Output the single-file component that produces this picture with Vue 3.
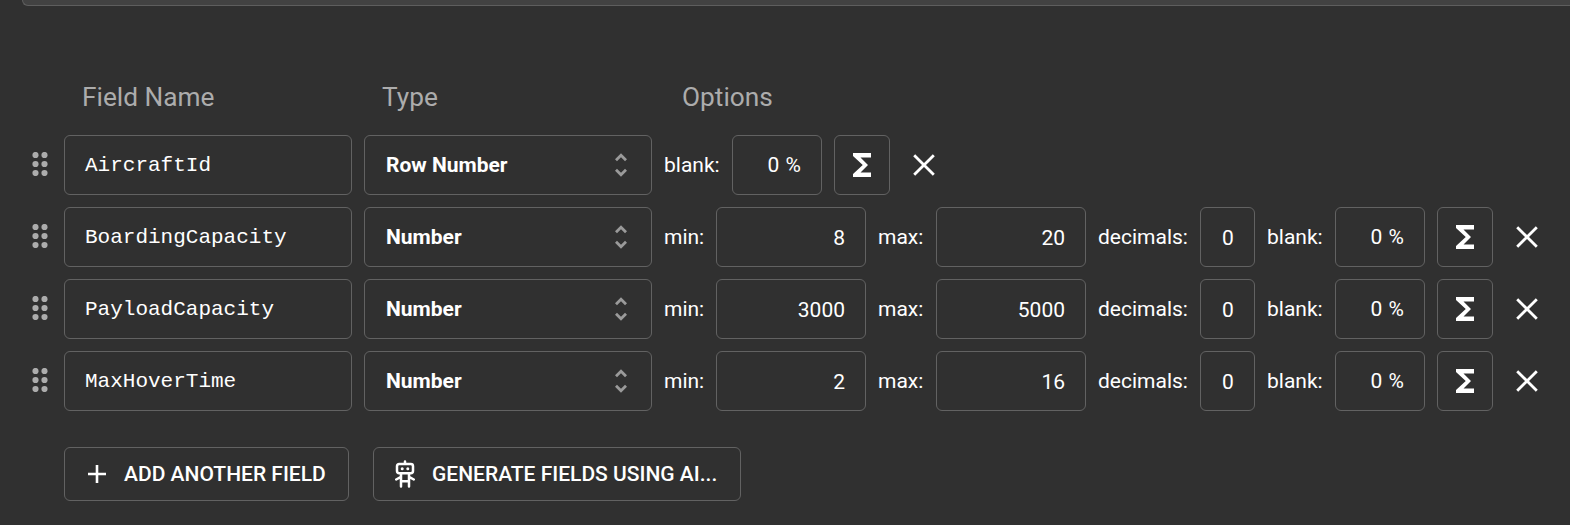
<script setup>
const rows = [
  { name: 'AircraftId', type: 'Row Number' },
  { name: 'BoardingCapacity', type: 'Number', min: '8', max: '20', decimals: '0' },
  { name: 'PayloadCapacity', type: 'Number', min: '3000', max: '5000', decimals: '0' },
  { name: 'MaxHoverTime', type: 'Number', min: '2', max: '16', decimals: '0' },
]
</script>

<template>
  <main class="page">
    <div class="panel"></div>
    <header class="head">
      <span class="col">Field Name</span>
      <span class="col">Type</span>
      <span class="col">Options</span>
    </header>
    <section class="rows">
      <div v-for="row in rows" :key="row.name" class="row">
        <svg class="grip" width="16" height="24" viewBox="0 0 16 24">
          <circle cx="3.5" cy="3" r="3.1" /><circle cx="12.5" cy="3" r="3.1" />
          <circle cx="3.5" cy="12" r="3.1" /><circle cx="12.5" cy="12" r="3.1" />
          <circle cx="3.5" cy="21" r="3.1" /><circle cx="12.5" cy="21" r="3.1" />
        </svg>
        <div class="box name">{{ row.name }}</div>
        <div class="box type">
          <span>{{ row.type }}</span>
          <svg class="chev" width="12" height="24" viewBox="0 0 12 24">
            <path d="M1 7.2 6 2.2l5 5M1 16.8l5 5 5-5" />
          </svg>
        </div>
        <template v-if="row.min">
          <span class="label min">min:</span>
          <div class="box num">{{ row.min }}</div>
          <span class="label max">max:</span>
          <div class="box num">{{ row.max }}</div>
          <span class="label decimals">decimals:</span>
          <div class="box dec">{{ row.decimals }}</div>
        </template>
        <span class="label blank">blank:</span>
        <div class="box pct">0 %</div>
        <div class="box sigma">
          <svg width="18" height="24" viewBox="0 0 18 24">
            <path d="M18 0H0v3l9.750 9L0 21v3h18v-4.500H7.500L15 12 7.500 4.500H18z" />
          </svg>
        </div>
        <svg class="close" width="22" height="22" viewBox="0 0 22 22">
          <path d="M1.2 1.2 20.8 20.8M20.8 1.2 1.2 20.8" />
        </svg>
      </div>
    </section>
    <footer class="actions">
      <button class="btn add">
        <svg width="18" height="18" viewBox="0 0 18 18"><path class="plus" d="M9 0v18M0 9h18" /></svg>
        <span>ADD ANOTHER FIELD</span>
      </button>
      <button class="btn ai">
        <svg class="bot" width="20" height="28" viewBox="0 0 20 28">
          <path d="M10 1.500V4M4.200 4h11.600q2.200 0 2.200 2.200v4.800q0 2.200-2.200 2.200H4.200Q2 13.200 2 11V6.200Q2 4 4.200 4zM1.200 19.500l4.800-2.700M18.800 19.500l-4.800-2.700M6 26.500V14M14 26.500V14M6 21.300h8" />
          <circle cx="7.200" cy="8.800" r="1.500" /><circle cx="12.800" cy="8.800" r="1.500" />
        </svg>
        <span>GENERATE FIELDS USING AI...</span>
      </button>
    </footer>
  </main>
</template>

<style>
body { margin: 0; background: #303030; overflow: hidden; }
</style>

<style scoped>
.page {
  box-sizing: border-box;
  width: 1570px;
  height: 525px;
  overflow: hidden;
  background: #303030;
  color: #fff;
  font-family: Roboto, sans-serif;
  font-size: 21px;
}
.panel {
  box-sizing: border-box;
  height: 6px;
  margin-left: 22px;
  background: #424242;
  border: 1px solid #5e5e5e;
  border-width: 0 0 1px 1px;
  border-bottom-left-radius: 6px;
}
.head {
  display: flex;
  height: 40px;
  margin: 71px 0 18px 82px;
  line-height: 40px;
  font-size: 26.25px;
  color: #acacac;
}
.col { width: 300px; }
.rows { display: flex; flex-direction: column; gap: 12px; }
.row { display: flex; align-items: center; height: 60px; padding-left: 32px; }
.grip { margin-right: 16px; margin-bottom: 2px; flex: none; fill: #acacac; }
.box {
  box-sizing: border-box;
  display: flex;
  align-items: center;
  flex: none;
  height: 60px;
  margin-right: 12px;
  padding: 0 20px;
  border: 1px solid #626262;
  border-radius: 6px;
}
.name { width: 288px; font-family: "Liberation Mono", monospace; }
.type { width: 288px; padding-right: 24px; justify-content: space-between; font-weight: 700; padding-left: 21px; padding-bottom: 1px; }
.chev { fill: none; stroke: #9a9a9a; stroke-width: 2.8; }
.label { flex: none; margin-right: 12px; padding-bottom: 1px; white-space: nowrap; }
.min { width: 40px; }
.max { width: 46px; }
.decimals { width: 90px; }
.blank { width: 56px; }
.num { width: 150px; justify-content: flex-end; padding-top: 1px; }
.dec { width: 55px; padding: 1px 0 0 21px; }
.pct { width: 90px; justify-content: flex-end; word-spacing: 1px; padding-bottom: 1px; }
.sigma { width: 56px; padding: 0; justify-content: center; fill: #fff; }
.close { margin-left: 11px; flex: none; fill: none; stroke: #fff; stroke-width: 2.8; }
.actions { display: flex; gap: 24px; margin: 36px 0 0 64px; }
.btn {
  box-sizing: border-box;
  display: flex;
  align-items: center;
  height: 54px;
  padding: 0 0 0 23px;
  border: 1px solid #626262;
  border-radius: 6px;
  background: none;
  color: #fff;
  font: 500 21px Roboto, sans-serif;
  white-space: nowrap;
}
.add { width: 285px; gap: 18px; }
.ai { width: 368px; padding-left: 21px; gap: 17px; }
.plus { stroke: #fff; stroke-width: 2.6; }
.bot { fill: none; stroke: #fff; stroke-width: 2.5; stroke-linecap: round; }
.bot circle { fill: #fff; stroke: none; }
</style>
